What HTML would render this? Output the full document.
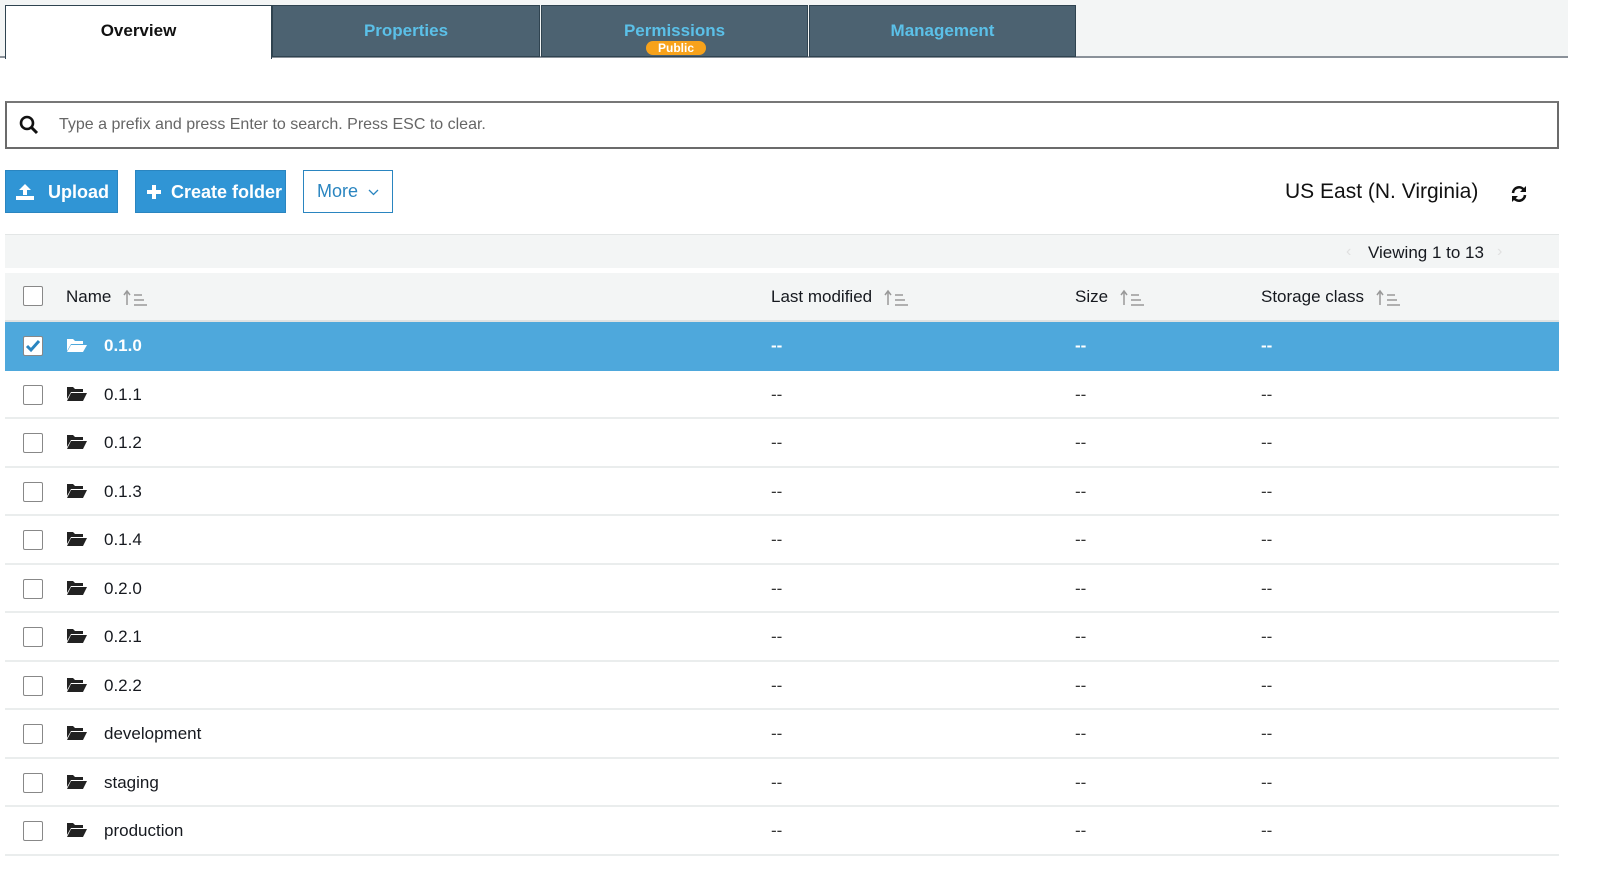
<!DOCTYPE html>
<html><head><style>
*{box-sizing:border-box;margin:0;padding:0}
body{width:1600px;height:877px;background:#fff;font-family:"Liberation Sans",Arial,sans-serif;position:relative;overflow:hidden;color:#16191f}
.abs{position:absolute}
.tabbar{left:0;top:0;width:1568px;height:58px;background:#f3f5f5;border-bottom:2px solid #8a9199}
.tab{top:5px;height:52px;background:#4c6271;border:1px solid #2f4350;color:#5bc0e8;font-weight:bold;font-size:17px;text-align:center;line-height:50px}
.tab.act{background:#fff;color:#111;border:1px solid #2f4350;border-bottom:none;height:54px;z-index:2}
.badge{position:absolute;left:104px;top:35px;width:60px;height:14px;background:#f7a21b;border-radius:7px;color:#fff;font-size:12px;line-height:14px;font-weight:bold}
.search{left:5px;top:101px;width:1554px;height:48px;border:2px solid #6b6b6b;border-top-color:#777;font-size:16px;color:#666;line-height:44px;padding-left:52px}
.btn{top:170px;height:43px;background:#3095d5;color:#fff;font-size:18px;font-weight:bold;line-height:43px;border:1px solid #2a85c0}
.row{left:5px;width:1554px;height:48.5px;border-bottom:2px solid #eaeded;font-size:17px}
.row span{position:absolute;top:0;line-height:47px}
.cb{position:absolute;left:18px;top:14px;width:20px;height:20px;border:1px solid #888;border-radius:2px;background:#fff}
.dash{color:#333}
.sort{display:inline-block;vertical-align:middle;margin-left:12px}
</style></head><body>
<div class="abs tabbar"></div>
<div class="abs tab act" style="left:5px;width:267px">Overview</div>
<div class="abs tab" style="left:272px;width:268px">Properties</div>
<div class="abs tab" style="left:541px;width:267px;line-height:50px"><div style="margin-top:0px">Permissions</div><div class="badge">Public</div></div>
<div class="abs tab" style="left:809px;width:267px">Management</div>

<div class="abs search">Type a prefix and press Enter to search. Press ESC to clear.</div>
<svg class="abs" style="left:19px;top:115px" width="20" height="20" viewBox="0 0 20 20"><circle cx="8" cy="8" r="6" fill="none" stroke="#111" stroke-width="2.6"/><line x1="12.5" y1="12.5" x2="18" y2="18" stroke="#111" stroke-width="3"/></svg>

<div class="abs btn" style="left:5px;width:113px;padding-left:42px">Upload</div>
<svg class="abs" style="left:15px;top:183px" width="20" height="18" viewBox="0 0 20 18"><path d="M10 1 L4 7 H8 V12 H12 V7 H16 Z" fill="#fff"/><rect x="1" y="13" width="18" height="4" fill="#fff"/></svg>
<div class="abs btn" style="left:135px;width:151px;padding-left:35px">Create folder</div>
<svg class="abs" style="left:147px;top:185px" width="14" height="14"><rect x="5" y="0" width="4" height="14" fill="#fff"/><rect x="0" y="5" width="14" height="4" fill="#fff"/></svg>
<div class="abs" style="left:303px;top:170px;width:90px;height:43px;border:1px solid #2a85c0;color:#2a85c0;font-size:18px;line-height:41px;padding-left:13px">More</div>
<svg class="abs" style="left:368px;top:189px" width="11" height="7"><path d="M1 1 L5.5 5.5 L10 1" fill="none" stroke="#2a85c0" stroke-width="1.3"/></svg>

<div class="abs" style="left:1285px;top:180px;font-size:21px;color:#111">US East (N. Virginia)</div>
<svg class="abs" style="left:1510px;top:185px" width="18" height="18" viewBox="0 0 18 18"><path d="M3 8 A6 6 0 0 1 14 5" fill="none" stroke="#111" stroke-width="2.6"/><path d="M16 1 V7 H10 Z" fill="#111"/><path d="M15 10 A6 6 0 0 1 4 13" fill="none" stroke="#111" stroke-width="2.6"/><path d="M2 17 V11 H8 Z" fill="#111"/></svg>

<div class="abs" style="left:5px;top:234px;width:1554px;height:34px;background:#f3f5f5;border-top:1px solid #e3e6e6"></div>
<div class="abs" style="left:1368px;top:243px;font-size:17px">Viewing 1 to 13</div>
<div class="abs" style="left:1346px;top:243px;font-size:16px;color:#e0e0e0">‹</div>
<div class="abs" style="left:1497px;top:243px;font-size:16px;color:#e0e0e0">›</div>

<div class="abs row" style="top:273px;background:#f3f5f5;border-bottom:2px solid #dfe2e2;font-weight:normal">
<div class="cb" style="top:13px"></div>
<span style="left:61px">Name<svg class="sort" width="24" height="18"><path d="M4 16V3M1 6L4 2L7 6" stroke="#999" stroke-width="1.5" fill="none"/><path d="M11 6H19M11 11H21M11 16H24" stroke="#999" stroke-width="1.6"/></svg></span>
<span style="left:766px">Last modified<svg class="sort" width="24" height="18"><path d="M4 16V3M1 6L4 2L7 6" stroke="#999" stroke-width="1.5" fill="none"/><path d="M11 6H19M11 11H21M11 16H24" stroke="#999" stroke-width="1.6"/></svg></span>
<span style="left:1070px">Size<svg class="sort" width="24" height="18"><path d="M4 16V3M1 6L4 2L7 6" stroke="#999" stroke-width="1.5" fill="none"/><path d="M11 6H19M11 11H21M11 16H24" stroke="#999" stroke-width="1.6"/></svg></span>
<span style="left:1256px">Storage class<svg class="sort" width="24" height="18"><path d="M4 16V3M1 6L4 2L7 6" stroke="#999" stroke-width="1.5" fill="none"/><path d="M11 6H19M11 11H21M11 16H24" stroke="#999" stroke-width="1.6"/></svg></span>
</div>

<div id="rows"></div>
<script>
var names=["0.1.0","0.1.1","0.1.2","0.1.3","0.1.4","0.2.0","0.2.1","0.2.2","development","staging","production"];
var h="";
names.forEach(function(n,i){
 var top=322+i*48.5, sel=i==0;
 h+='<div class="abs row" style="top:'+top+'px;'+(sel?'background:#4ea8dc;border-bottom-color:#4ea8dc;color:#fff;font-weight:bold':'')+'">'+
 '<div class="cb">'+(sel?'<svg width="18" height="18" style="position:absolute;left:0;top:0"><path d="M3 9L7 13L15 4" stroke="#2a85c0" stroke-width="3" fill="none"/></svg>':'')+'</div>'+
 '<svg style="position:absolute;left:61px;top:15px" width="21" height="16" viewBox="0 0 21 16">'+(sel?'<path d="M1 2H7L9 4H17V7H5L1 14Z" fill="#fff"/><path d="M5 8H21L17 15H1Z" fill="#fff"/>':'<path d="M1 1H7L9 3H17V6H5L1 13Z" fill="#222"/><path d="M5 7H21L17 15H1Z" fill="#222"/>')+'</svg>'+
 '<span style="left:99px">'+n+'</span><span class="dash" style="left:766px;'+(sel?'color:#fff':'')+'">--</span><span class="dash" style="left:1070px;'+(sel?'color:#fff':'')+'">--</span><span class="dash" style="left:1256px;'+(sel?'color:#fff':'')+'">--</span></div>';
});
document.getElementById("rows").innerHTML=h;
</script>
</body></html>
